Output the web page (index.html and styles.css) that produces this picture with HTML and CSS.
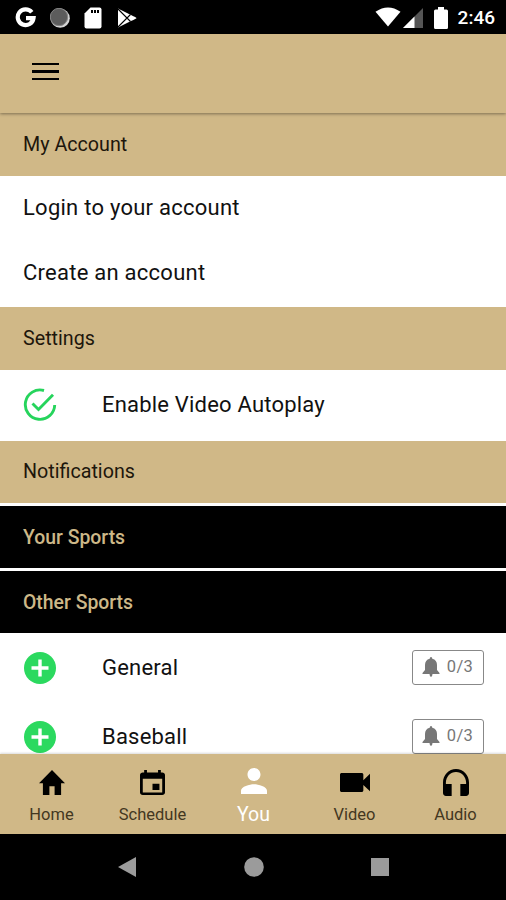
FILE: index.html
```html
<!DOCTYPE html>
<html lang="en">
  <head>
    <meta charset="UTF-8" />
    <meta name="viewport" content="width=device-width, initial-scale=1.0" />
    <title>My Account</title>
    <link rel="stylesheet" href="styles.css">
  </head>
  <body>
    <div class="status-bar">
      <div class="status-left">
        <svg class="google" width="22" height="22" viewBox="0 0 22 22">
          <path d="M16.8 5.2A7.900 7.900 0 1 0 18.500 11.200H11" fill="none" stroke="#fff" stroke-width="4.200" />
        </svg>
        <svg class="sync" width="20" height="20" viewBox="0 0 20 20">
          <circle cx="10.2" cy="10.2" r="9.6" fill="#d5d5d5" />
          <circle cx="9" cy="9" r="8.7" fill="#5c5c5c" stroke="#858585" />
        </svg>
        <svg class="sd-card" width="18" height="22" viewBox="0 0 18 22">
          <path d="M6.5 .5H15.5Q17.5 .5 17.5 2.5V19.5Q17.5 21.5 15.5 21.5H2.5Q.5 21.5 .5 19.5V6.5Z" fill="#fff" />
          <path d="M7 3h2v3H7zM10 3h2v3h-2zM13 3h2v3h-2z" fill="#000" />
        </svg>
        <svg class="play" width="20" height="20" viewBox="0 0 20 20">
          <path d="M1 .5L14 7Q19.5 9.5 19.5 10T14 13L1 19.5Z" fill="#fff" />
          <path d="M1 1L13.5 13.5M1 19L13.5 6.5" stroke="#000" stroke-width="1.1" />
        </svg>
      </div>
      <div class="status-right">
        <svg width="26" height="20" viewBox="0 0 26 20">
          <path d="M.5 4.8Q13-4 25.5 4.8L13 19.5Z" fill="#fff" />
        </svg>
        <svg class="signal" width="20" height="20" viewBox="0 0 20 20">
          <path d="M20 0V20H0Z" fill="#555" />
          <path d="M11.5 8.5V20H0Z" fill="#fff" />
        </svg>
        <svg class="battery" width="14" height="22" viewBox="0 0 14 22">
          <path d="M4 0h6v2.500h2.500Q14 2.500 14 4v16.500q0 1.500-1.500 1.500h-11Q0 22 0 20.500V4Q0 2.500 1.500 2.500H4z" fill="#fff" />
        </svg>
        <span class="clock">2:46</span>
      </div>
    </div>

    <header class="top-bar">
      <button class="menu-btn" aria-label="Menu">
        <span></span>
        <span></span>
        <span></span>
      </button>
    </header>

    <main class="content">
      <h2 class="section-title">My Account</h2>
      <div class="link-row">Login to your account</div>
      <div class="link-row">Create an account</div>

      <h2 class="section-title">Settings</h2>
      <div class="option-row autoplay">
        <svg class="option-icon" width="34" height="34" viewBox="0 0 34 34">
          <path d="M21 2.500A14.700 14.700 0 1 0 31.700 17M9.500 15.500L15.500 21.500L30 6.800" fill="none" stroke="#26d45c" stroke-width="2.900" />
        </svg>
        <span>Enable Video Autoplay</span>
      </div>

      <h2 class="section-title notifications">Notifications</h2>
      <h3 class="sports-title">Your Sports</h3>
      <h3 class="sports-title">Other Sports</h3>

      <div class="option-row">
        <svg class="option-icon" width="34" height="34" viewBox="0 0 34 34">
          <circle cx="17" cy="17" r="16" fill="#2bd95f" />
          <path d="M17 8.500V25.500M8.500 17H25.500" stroke="#fff" stroke-width="3.400" />
        </svg>
        <span>General</span>
        <button class="alerts-btn">
          <svg width="18" height="20" viewBox="0 0 18 20">
            <path d="M9 0Q10.300 0 10.300 1.800Q15 3 15 8V13L17.500 16V17H.5V16L3 13V8Q3 3 7.700 1.800Q7.700 0 9 0ZM7.500 17H10.500Q10.300 20 9 20T7.500 17Z" fill="#777" />
          </svg>
          0/3
        </button>
      </div>
      <div class="option-row">
        <svg class="option-icon" width="34" height="34" viewBox="0 0 34 34">
          <circle cx="17" cy="17" r="16" fill="#2bd95f" />
          <path d="M17 8.500V25.500M8.500 17H25.500" stroke="#fff" stroke-width="3.400" />
        </svg>
        <span>Baseball</span>
        <button class="alerts-btn">
          <svg width="18" height="20" viewBox="0 0 18 20">
            <path d="M9 0Q10.300 0 10.300 1.800Q15 3 15 8V13L17.500 16V17H.5V16L3 13V8Q3 3 7.700 1.800Q7.700 0 9 0ZM7.500 17H10.500Q10.300 20 9 20T7.500 17Z" fill="#777" />
          </svg>
          0/3
        </button>
      </div>
    </main>

    <nav class="tab-bar">
      <a class="tab">
        <svg width="26" height="25" viewBox="2 3 20 17" preserveAspectRatio="none">
          <path d="M10 20v-6h4v6h5v-8h3L12 3 2 12h3v8z" />
        </svg>
        <span>Home</span>
      </a>
      <a class="tab">
        <svg width="25" height="25" viewBox="3 1 18 20" preserveAspectRatio="none">
          <path d="M17 12h-5v5h5v-5zM16 1v2H8V1H6v2H5c-1.110 0-1.990.9-1.990 2L3 19c0 1.100.89 2 2 2h14c1.100 0 2-.9 2-2V5c0-1.100-.9-2-2-2h-1V1h-2zm3 18H5V8h14v11z" />
        </svg>
        <span>Schedule</span>
      </a>
      <a class="tab active">
        <svg width="26" height="26" viewBox="4 4 16 16">
          <path d="M12 12c2.210 0 4-1.790 4-4s-1.790-4-4-4-4 1.790-4 4 1.790 4 4 4zm0 2c-2.670 0-8 1.340-8 4v2h16v-2c0-2.660-5.330-4-8-4z" />
        </svg>
        <span>You</span>
      </a>
      <a class="tab">
        <svg width="30" height="19" viewBox="3 6 18 12" preserveAspectRatio="none">
          <path d="M17 10.500V7c0-.55-.45-1-1-1H4c-.55 0-1 .45-1 1v10c0 .55.45 1 1 1h12c.55 0 1-.45 1-1v-3.500l4 4v-11l-4 4z" />
        </svg>
        <span>Video</span>
      </a>
      <a class="tab">
        <svg width="26" height="27" viewBox="3 3 18 18" preserveAspectRatio="none">
          <path d="M12 3c-4.970 0-9 4.030-9 9v7c0 1.100.9 2 2 2h4v-8H5v-1c0-3.870 3.130-7 7-7s7 3.130 7 7v1h-4v8h4c1.100 0 2-.9 2-2v-7c0-4.970-4.030-9-9-9z" />
        </svg>
        <span>Audio</span>
      </a>
    </nav>

    <div class="system-nav">
      <svg width="18" height="20" viewBox="0 0 18 20"><path d="M0 10L18 0V20Z" /></svg>
      <svg width="20" height="20" viewBox="0 0 20 20"><circle cx="10" cy="10" r="9.800" /></svg>
      <svg width="18" height="18" viewBox="0 0 18 18"><path d="M0 0H18V18H0Z" /></svg>
    </div>
  </body>
</html>
```

FILE: styles.css
```css
* {
  box-sizing: border-box;
}

body {
  margin: 0;
  height: 900px;
  display: flex;
  flex-direction: column;
  overflow: hidden;
  background: #fff;
  font-family: Roboto, sans-serif;
  color: #111;
}

svg {
  display: block;
  flex: none;
}

/* Android status bar */
.status-bar {
  flex: none;
  display: flex;
  justify-content: space-between;
  height: 34px;
  padding: 0 11px 0 15px;
  background: #000;
}

.status-left,
.status-right {
  display: flex;
  align-items: center;
}

.status-left {
  padding-top: 1px;
}

.sync {
  margin-left: 13px;
}

.sd-card {
  margin-left: 14px;
}

.play {
  margin-left: 15px;
}

.status-right {
  padding-top: 1px;
}

.status-right svg:first-child {
  margin-bottom: 2px;
}

.signal {
  margin-left: 2px;
}

.battery {
  margin-left: 11px;
}

.clock {
  margin-left: 10px;
  color: #fff;
  font-size: 19px;
  font-weight: 500;
}

.top-bar {
  position: relative;
  flex: none;
  display: flex;
  height: 79px;
  padding: 29px 32px 23px;
  background: #d0b887;
  box-shadow: 0 1px 3px rgba(0, 0, 0, 0.4);
}

.menu-btn {
  display: flex;
  flex-direction: column;
  gap: 5px;
  width: 27px;
  padding: 0;
  border: none;
  background: none;
}

.menu-btn span {
  height: 2.4px;
  background: #000;
}

.content {
  flex: 1;
  min-height: 0;
  overflow: hidden;
}

.section-title,
.sports-title {
  display: flex;
  align-items: center;
  height: 63px;
  margin: 0;
  padding: 0 23px 1px;
  background: #d0b887;
  color: #1d160c;
  font-size: 19.7px;
  font-weight: 400;
}

.notifications {
  height: 62px;
}

.sports-title {
  margin-top: 3px;
  padding-bottom: 0;
  background: #000;
  color: #cdb888;
  height: 62px;
  font-size: 19.4px;
  font-weight: 500;
}

.link-row {
  display: flex;
  align-items: center;
  height: 65.5px;
  padding: 0 23px 2px;
  font-size: 22px;
  letter-spacing: 0.25px;
}

.link-row + .link-row {
  padding-bottom: 4px;
}

.option-row {
  display: flex;
  align-items: center;
  height: 69px;
  padding: 0 22px 0 23px;
  font-size: 22px;
  letter-spacing: 0.2px;
}

.autoplay {
  height: 71px;
  padding-bottom: 2px;
}

.option-icon {
  margin-right: 45px;
}

.alerts-btn {
  display: flex;
  align-items: center;
  justify-content: center;
  gap: 7px;
  width: 72px;
  height: 35px;
  margin-left: auto;
  padding: 0 1px 2px 0;
  border: 1px solid #888;
  border-radius: 3px;
  background: #fff;
  color: #777;
  font-family: inherit;
  font-size: 16.5px;
  letter-spacing: 0.3px;
}

/* Bottom tabs */
.tab-bar {
  position: relative;
  flex: none;
  display: grid;
  grid-template-columns: repeat(5, 1fr);
  height: 80px;
  padding-left: 1px;
  background: #d0b887;
  box-shadow: 0 -1px 2px rgba(0, 0, 0, 0.15);
}

.tab {
  display: grid;
  grid-template-rows: 51px 29px;
  align-items: center;
  justify-items: center;
  padding-top: 1px;
  color: #43371f;
  font-size: 16.5px;
  line-height: 18px;
}

.tab svg {
  margin-top: 4px;
  fill: #000;
}

.tab span {
  align-self: start;
}

.tab.active {
  color: #fff;
  font-size: 19.5px;
}

.tab.active svg {
  margin-top: 0;
  fill: #fff;
}

.system-nav {
  flex: none;
  display: flex;
  align-items: center;
  justify-content: space-between;
  height: 66px;
  padding: 0 117px 0 118px;
  background: #000;
}

.system-nav svg {
  fill: #9b9b9b;
}
```
